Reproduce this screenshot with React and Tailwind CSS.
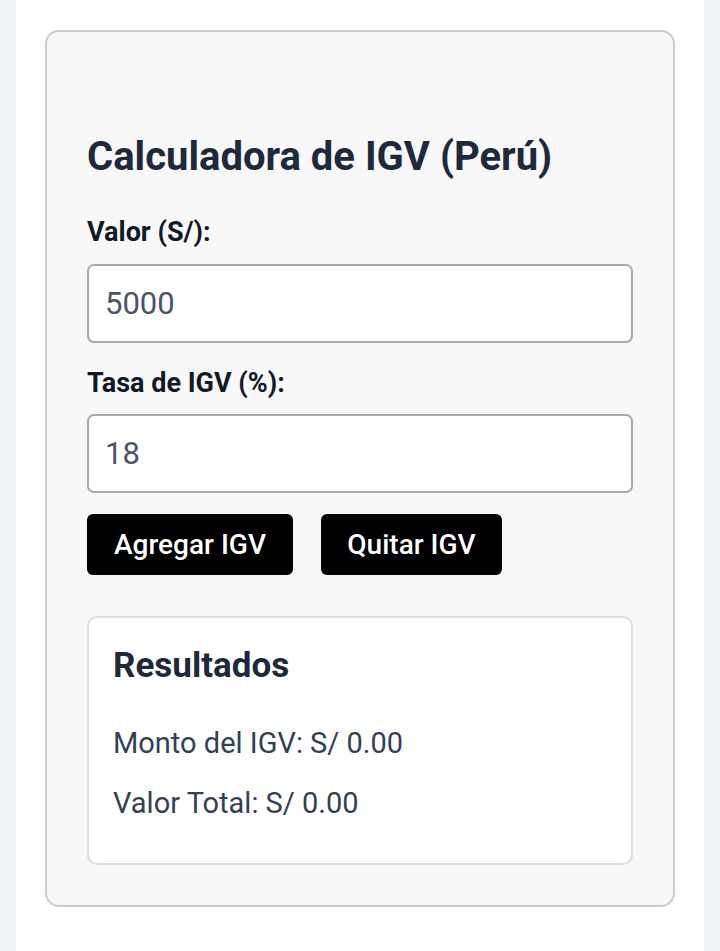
import React, { useState } from 'react';

export default function App() {
  const [valor, setValor] = useState('5000');
  const [tasa, setTasa] = useState('18');
  const [igv, setIgv] = useState(0);
  const [total, setTotal] = useState(0);

  const agregar = () => {
    const v = parseFloat(valor) || 0;
    const t = (parseFloat(tasa) || 0) / 100;
    setIgv(v * t);
    setTotal(v * (1 + t));
  };

  const quitar = () => {
    const v = parseFloat(valor) || 0;
    const t = (parseFloat(tasa) || 0) / 100;
    const base = v / (1 + t);
    setIgv(v - base);
    setTotal(base);
  };

  return (
    <div className="min-h-screen bg-[#eef3f8] font-['Roboto',sans-serif]">
      <div className="mx-4 min-h-[951px] bg-white px-[29px] pt-[30px] pb-[45px]">
        {/* Card */}
        <div className="rounded-[14px] border-2 border-[#cccccc] bg-[#f8f8f8] px-10 pt-10 pb-10">
          <h1 className="mt-[61px] text-[40px] font-bold leading-[48px] text-[#1e293b]">
            Calculadora de IGV (Perú)
          </h1>

          <label className="mt-[35px] block text-[27px] font-bold leading-[32px] text-[#111827]">
            Valor (S/):
          </label>
          <input
            type="text"
            value={valor}
            onChange={(e) => setValor(e.target.value)}
            className="mt-[16px] block h-[79px] w-full rounded-[7px] border-2 border-[#a9a9a9] bg-white px-4 text-[31px] text-[#4a5568] outline-none"
          />

          <label className="mt-6 block text-[27px] font-bold leading-[32px] text-[#111827]">
            Tasa de IGV (%):
          </label>
          <input
            type="text"
            value={tasa}
            onChange={(e) => setTasa(e.target.value)}
            className="mt-[15px] block h-[79px] w-full rounded-[7px] border-2 border-[#a9a9a9] bg-white px-4 text-[31px] text-[#4a5568] outline-none"
          />

          <div className="mt-[21px] flex gap-[28px]">
            <button
              onClick={agregar}
              className="h-[61px] w-[206px] rounded-[6px] bg-black text-[28px] font-medium text-white"
            >
              Agregar IGV
            </button>
            <button
              onClick={quitar}
              className="h-[61px] w-[181px] rounded-[6px] bg-black text-[28px] font-medium text-white"
            >
              Quitar IGV
            </button>
          </div>

          {/* Resultados */}
          <div className="mt-[41px] rounded-[10px] border-2 border-[#dddddd] bg-white px-6 pt-[27px] pb-[42px]">
            <h2 className="text-[35px] font-bold leading-[42px] text-[#1e293b]">Resultados</h2>
            <p className="mt-[39px] text-[29px] leading-[35px] text-[#334155]">
              Monto del IGV: S/ {igv.toFixed(2)}
            </p>
            <p className="mt-[25px] text-[29px] leading-[35px] text-[#334155]">
              Valor Total: S/ {total.toFixed(2)}
            </p>
          </div>
        </div>
      </div>
    </div>
  );
}
